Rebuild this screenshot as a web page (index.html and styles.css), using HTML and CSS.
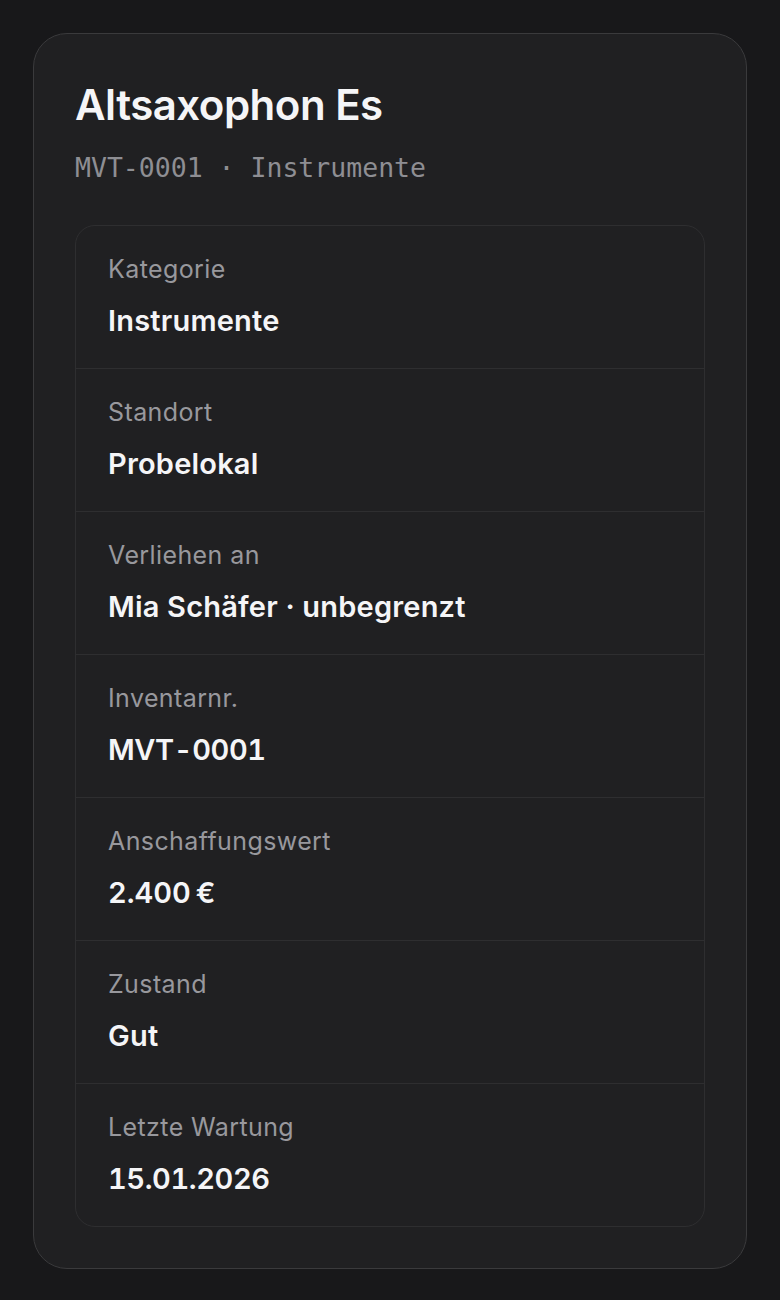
FILE: index.html
```html
<!DOCTYPE html>
<html lang="de">
<head>
    <meta charset="UTF-8">
    <meta name="viewport" content="width=device-width, initial-scale=1.0">
    <title>Altsaxophon Es</title>
    <link rel="stylesheet" href="styles.css">
</head>
<body>
    <div class="card">
        <h1>Altsaxophon Es</h1>
        <p class="meta">MVT-0001 · Instrumente</p>

        <dl class="details">
            <div class="row">
                <dt>Kategorie</dt>
                <dd>Instrumente</dd>
            </div>
            <div class="row">
                <dt>Standort</dt>
                <dd>Probelokal</dd>
            </div>
            <div class="row">
                <dt>Verliehen an</dt>
                <dd>Mia Schäfer · unbegrenzt</dd>
            </div>
            <div class="row">
                <dt>Inventarnr.</dt>
                <dd class="num">MVT-0001</dd>
            </div>
            <div class="row">
                <dt>Anschaffungswert</dt>
                <dd class="num">2.400&#8239;€</dd>
            </div>
            <div class="row">
                <dt>Zustand</dt>
                <dd>Gut</dd>
            </div>
            <div class="row">
                <dt>Letzte Wartung</dt>
                <dd class="num">15.01.2026</dd>
            </div>
        </dl>
    </div>
</body>
</html>
```

FILE: styles.css
```css
html {
    background-color: #18181a;
}
body {
    margin: 0;
    padding: 33px;
    font-family: Inter, "Noto Sans", sans-serif;
    color: #f5f5f7;
    background-color: #18181a;
}
.card {
    background-color: #202022;
    border: 1px solid #3a3a3c;
    border-radius: 34px;
    padding: 46px 41px 41px;
}
h1 {
    margin: 0;
    font-size: 42px;
    font-weight: 600;
    line-height: 50px;
    letter-spacing: -0.5px;
}
.meta {
    margin: 21px 0 0;
    font-family: "DejaVu Sans Mono", "Liberation Mono", monospace;
    font-size: 26.5px;
    line-height: 34px;
    color: #8e8e93;
}
.details {
    margin: 40px 0 0;
    border: 1px solid #2e2e30;
    border-radius: 20px;
}
.row {
    padding: 27px 32px 29px;
    border-top: 1px solid #2e2e30;
}
.row:first-child {
    border-top: none;
}
dt {
    font-size: 25px;
    line-height: 32px;
    letter-spacing: 0.4px;
    color: #98989d;
}
dd {
    margin: 18px 0 0;
    font-size: 29px;
    font-weight: 600;
    line-height: 36px;
    letter-spacing: 0.2px;
}
dd.num {
    font-variant-numeric: tabular-nums;
    letter-spacing: -0.4px;
}
```
